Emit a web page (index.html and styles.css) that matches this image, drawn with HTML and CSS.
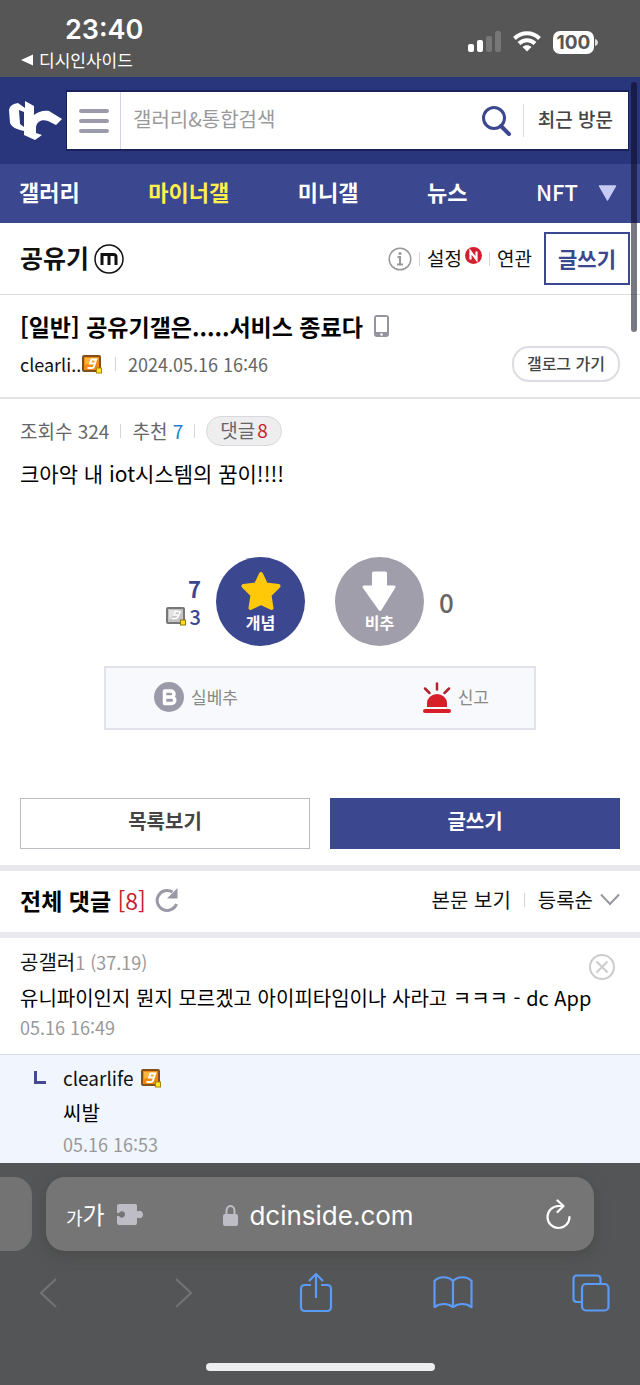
FILE: index.html
```html
<!DOCTYPE html>
<html lang="ko">
<head>
<meta charset="utf-8">
<meta name="viewport" content="width=device-width, initial-scale=1">
<title>공유기 갤러리</title>
<link rel="stylesheet" href="styles.css">
</head>
<body>
<svg class="defs" width="0" height="0" aria-hidden="true">
  <symbol id="badge-g" viewBox="0 0 20 19">
    <rect x="1" y="1" width="17" height="15" rx="1" fill="#f08a10" stroke="#80501c" stroke-width="2"/>
    <path d="M3 3h13v2L3 10z" fill="#ffb43c"/>
    <path d="M14.500 3.500L12 11.500q-.5 1.500-2 1.500H5.500M13.500 4.500H9.500L8 8.500h4.500" fill="none" stroke="#fff" stroke-width="2"/>
    <rect x="14.500" y="13" width="5" height="5" fill="#ffe81e" stroke="#a88310"/>
  </symbol>
  <symbol id="badge-gray" viewBox="0 0 20 19">
    <rect x="1" y="1" width="17" height="15" rx="1" fill="#c4c4c4" stroke="#777" stroke-width="2"/>
    <path d="M3 3h9L3 13z" fill="#e2e2e2"/>
    <path d="M14.500 4L12.500 9l-2 2.500H5.500M13.500 4.500H9.500L8 8h4" fill="none" stroke="#fff" stroke-width="1.500"/>
    <rect x="14.500" y="13" width="5" height="5" fill="#ffdf1e" stroke="#8f7510"/>
  </symbol>
</svg>

<header class="status">
  <div class="status-left">
    <time class="clock">23:40</time>
    <a class="back-app" href="#"><svg width="12" height="12" viewBox="0 0 12 12"><path d="M0 6L12 0.500v11z" fill="#fff"/></svg>디시인사이드</a>
  </div>
  <div class="status-right">
    <svg width="33" height="22" viewBox="0 0 33 22"><rect x="0" y="13" width="6" height="8" rx="2" fill="#fff"/><rect x="9" y="9" width="6" height="12" rx="2" fill="#fff"/><rect x="18" y="5" width="6" height="16" rx="2" fill="#777"/><rect x="27" y="0" width="6" height="21" rx="2" fill="#777"/></svg>
    <svg width="28" height="21" viewBox="0 0 28 21"><g fill="none" stroke="#fff" stroke-width="4"><path d="M1.500 7.500C8.500.500 19.500.500 26.500 7.500"/><path d="M6 12.500c4.500-4.500 11.500-4.500 16 0"/></g><path d="M14 20.500l-4.500-4.500c2.500-2.500 6.500-2.500 9 0z" fill="#fff"/></svg>
    <span class="battery"><span class="battery-level">100</span><svg width="3" height="7" viewBox="0 0 3 7"><path d="M0 0c4 1 4 6 0 7z" fill="#ddd"/></svg></span>
  </div>
</header>

<div class="topbar">
  <a class="logo" href="#" aria-label="dcinside"><svg width="53" height="40" viewBox="0 0 53 40"><path fill="#fff" fill-rule="evenodd" d="M16 0L25 5v9c4-3 9-5 15-4L53 18l-6 6-8-4c-6-2-11 0-12 6v6l6 2-7 5-11-5v-4C10 29 3 27 1 22L0 9C1 5 3 4 5 3l4-1 7 5zM10 9l5 2v15l-4-3z"/></svg></a>
  <form class="search">
    <button class="search-menu" type="button" aria-label="메뉴"><svg width="30" height="24" viewBox="0 0 30 24"><path d="M2 2h26M2 12h26M2 22h26" stroke="#9c9ba9" stroke-width="4" stroke-linecap="round"/></svg></button>
    <input class="search-input" type="text" placeholder="갤러리&amp;통합검색" aria-label="갤러리&amp;통합검색">
    <button class="search-go" type="submit" aria-label="검색"><svg width="29" height="30" viewBox="0 0 29 30"><circle cx="12" cy="12" r="10.500" fill="none" stroke="#3b4890" stroke-width="3"/><path d="M19 20l8 8" stroke="#3b4890" stroke-width="4" stroke-linecap="round"/></svg></button>
    <button class="recent" type="button">최근 방문</button>
  </form>
</div>

<nav class="nav">
  <a href="#">갤러리</a>
  <a class="on" href="#">마이너갤</a>
  <a href="#">미니갤</a>
  <a href="#">뉴스</a>
  <span class="nav-last"><a href="#">NFT</a>
  <button class="nav-more" type="button" aria-label="더보기"><svg width="19" height="16" viewBox="0 0 19 16"><path d="M1.500 1h16L9.500 15z" fill="#c6cbf4" stroke="#c6cbf4" stroke-width="1.500" stroke-linejoin="round"/></svg></button></span>
</nav>

<section class="gallery">
  <h1 class="gallery-name"><a href="#">공유기</a><svg width="30" height="30" viewBox="0 0 30 30"><circle cx="15" cy="15" r="14" fill="none" stroke="#111" stroke-width="1.500"/><path d="M8 21V10.500h11.500q2.500 0 2.500 2.500v8M15 11v10" fill="none" stroke="#111" stroke-width="3"/></svg></h1>
  <div class="gallery-tools">
    <button class="plain" type="button" aria-label="정보"><svg width="24" height="24" viewBox="0 0 24 24"><circle cx="12" cy="12" r="10.800" fill="none" stroke="#999" stroke-width="1.500"/><circle cx="12" cy="6.500" r="1.500" fill="#999"/><path d="M9.500 10H12v7M9 17.500h6" fill="none" stroke="#999" stroke-width="2"/></svg></button>
    <span class="sep"></span>
    <a class="tool" href="#">설정<svg class="new" width="17" height="17" viewBox="0 0 17 17"><circle cx="8.500" cy="8.500" r="8.500" fill="#d31f30"/><path d="M5.500 12.500v-8l6 8v-8" fill="none" stroke="#fff" stroke-width="2.200"/></svg></a>
    <span class="sep"></span>
    <a class="tool related" href="#">연관</a>
    <a class="write-small" href="#">글쓰기</a>
  </div>
</section>

<main>
  <article>
    <header class="post-head">
      <h2 class="post-title">[일반] 공유기갤은.....서비스 종료다<svg width="15" height="22" viewBox="0 0 15 22"><rect width="15" height="22" rx="3" fill="#96959f"/><rect x="2" y="2" width="11" height="15" fill="#fff"/><circle cx="7.500" cy="19.500" r="1.200" fill="#fff"/></svg></h2>
      <div class="post-meta">
        <span class="author">clearli..</span><svg class="badge"><use href="#badge-g"/></svg><span class="sep"></span><time class="date">2024.05.16 16:46</time>
        <a class="gallog" href="#">갤로그 가기</a>
      </div>
    </header>
    <div class="post-body">
      <div class="counts"><span>조회수 324</span><span class="sep"></span><span>추천 <b class="blue">7</b></span><span class="sep"></span><a class="reply-count" href="#">댓글<b class="red">8</b></a></div>
      <p class="text">크아악 내 iot시스템의 꿈이!!!!</p>

      <div class="votes">
        <div class="up-counts">
          <strong>7</strong>
          <span class="fixed"><svg class="badge"><use href="#badge-gray"/></svg>3</span>
        </div>
        <button class="vote up" type="button"><svg width="42" height="41" viewBox="0 0 42 41"><path d="M21 3l5 10.500 12.500 1.500-9 9 2 13L21 32l-10.500 5 2-13-9-9L16 13.500z" fill="#ffc90a" stroke="#ffc90a" stroke-width="4" stroke-linejoin="round"/></svg>개념</button>
        <button class="vote down" type="button"><svg width="42" height="41" viewBox="0 0 42 41"><path d="M14.500 2h12v14h8.500L21 38.500 5 16h9.500z" fill="#fff" stroke="#fff" stroke-width="3" stroke-linejoin="round"/></svg>비추</button>
        <strong class="down-count">0</strong>
      </div>

      <div class="actions">
        <button class="action" type="button"><svg width="30" height="30" viewBox="0 0 30 30"><circle cx="15" cy="15" r="15" fill="#9b9aa9"/><path d="M10.500 9h6.500a2.500 2.500 0 0 1 0 6h-6.500zM10.500 15h7a3 3 0 0 1 0 6.500h-7z" fill="none" stroke="#fff" stroke-width="3.500" stroke-linejoin="round"/></svg>실베추</button>
        <button class="action" type="button"><svg width="28" height="31" viewBox="0 0 28 31"><g stroke="#b3232d" stroke-width="2.500" stroke-linecap="round"><path d="M14 1.500v6M2 6.500l4.500 4.500M26 6.500L21.500 11"/></g><path d="M4 25v-4a10 9 0 0 1 20 0v4z" fill="#d81f29"/><path d="M2 29h24" stroke="#d81f29" stroke-width="4" stroke-linecap="round"/></svg>신고</button>
      </div>

      <div class="buttons"><a class="btn" href="#">목록보기</a><a class="btn primary" href="#">글쓰기</a></div>
    </div>
  </article>

  <section>
    <header class="comments-head">
      <h3>전체 댓글 <span class="total">[8]</span></h3>
      <button class="plain" type="button" aria-label="새로고침"><svg width="24" height="24" viewBox="0 0 24 24"><path d="M21.500 16A10 10 0 1 1 17.500 4" fill="none" stroke="#9998a6" stroke-width="3"/><path d="M22.500 0v10.500H12z" fill="#9998a6"/></svg></button>
      <a class="view-post" href="#">본문 보기</a>
      <span class="sep"></span>
      <button class="plain sort" type="button">등록순<svg width="20" height="13" viewBox="0 0 20 13"><path d="M1 1.500l9 9.500 9-9.500" fill="none" stroke="#9998a0" stroke-width="2"/></svg></button>
    </header>
    <article class="comment">
      <div class="comment-main">
        <p class="name">공갤러<span class="ip">1 (37.19)</span></p>
        <button class="plain" type="button" aria-label="삭제"><svg width="26" height="26" viewBox="0 0 26 26"><g fill="none" stroke="#ccc" stroke-width="2"><circle cx="13" cy="13" r="12"/><path d="M7.500 7.500l11 11m0-11l-11 11"/></g></svg></button>
      </div>
      <p class="text">유니파이인지 뭔지 모르겠고 아이피타임이나 사라고 ㅋㅋㅋ - dc App</p>
      <time class="stamp">05.16 16:49</time>
    </article>
    <article class="comment reply">
      <svg class="reply-mark" width="12" height="13" viewBox="0 0 12 13"><path d="M1.500 0v11.500H12" fill="none" stroke="#454991" stroke-width="3"/></svg>
      <div>
        <p class="name">clearlife<svg class="badge"><use href="#badge-g"/></svg></p>
        <p class="text">씨발</p>
        <time class="stamp">05.16 16:53</time>
      </div>
    </article>
  </section>
</main>

<footer class="browser">
  <div class="tabs">
    <div class="prev-tab"></div>
    <div class="address">
      <button class="plain reader" type="button" aria-label="페이지 설정"><span class="small-ga">가</span>가<svg width="26" height="21" viewBox="0 0 26 21"><path d="M3 0h15q2 0 2 2v5.500c1.500-1.500 6-1 6 3s-4.500 4.500-6 3V19q0 2-2 2H2q-2 0-2-2v-7l2 0c2 3 6 1.500 6-1.500s-4-4.500-6-1.500H0V2q0-2 3-2z" fill="#bebdc6"/></svg></button>
      <span class="domain"><svg width="15" height="21" viewBox="0 0 15 21"><path d="M3.500 10V6a4 5 0 0 1 8 0v4" fill="none" stroke="#bebdc6" stroke-width="2"/><rect y="9" width="15" height="12" rx="2" fill="#bebdc6"/></svg>dcinside.com</span>
      <button class="plain reload" type="button" aria-label="새로고침"><svg width="25" height="31" viewBox="0 0 25 31"><path d="M23.500 18A11 11 0 1 1 12.500 7H17M11.500 1.500L17.500 7l-6 6" fill="none" stroke="#fff" stroke-width="2.200" stroke-linecap="round" stroke-linejoin="round"/></svg></button>
    </div>
  </div>
  <div class="toolbar">
    <button class="plain" type="button" aria-label="뒤로"><svg width="34" height="40" viewBox="0 0 34 40"><path d="M24 6L9 20l15 14" fill="none" stroke="#727374" stroke-width="2.200"/></svg></button>
    <button class="plain" type="button" aria-label="앞으로"><svg width="34" height="40" viewBox="0 0 34 40"><path d="M10 6l15 14-15 14" fill="none" stroke="#727374" stroke-width="2.200"/></svg></button>
    <button class="plain" type="button" aria-label="공유"><svg width="34" height="40" viewBox="0 0 34 40"><path d="M12 12H6q-4 0-4 4v18q0 4 4 4h22q4 0 4-4V16q0-4-4-4h-6M17 25V2M10 8l7-7 7 7" fill="none" stroke="#5b9bf8" stroke-width="2.200"/></svg></button>
    <button class="plain" type="button" aria-label="책갈피"><svg width="40" height="40" viewBox="0 0 40 40"><path d="M20 8C15 3 6 3 1.500 8v26c5.500-4 13-4 18.500 0 5.500-4 13-4 18.500 0V8C34 3 25 3 20 8zv26" fill="none" stroke="#5b9bf8" stroke-width="2.200" stroke-linejoin="round"/></svg></button>
    <button class="plain" type="button" aria-label="탭"><svg width="38" height="40" viewBox="0 0 38 40"><g fill="none" stroke="#5b9bf8" stroke-width="2.200"><path d="M10 29H5q-3.500 0-3.500-3.500V6q0-3.500 3.500-3.500h20q3.500 0 3.500 3.500v5"/><rect x="10" y="11" width="26.500" height="26.500" rx="4"/></g></svg></button>
  </div>
  <div class="home"></div>
</footer>
<div class="scroll-thumb"></div>
</body>
</html>
```
FILE: styles.css
```css
* { box-sizing: border-box; }
body {
  margin: 0;
  position: relative;
  min-height: 100vh;
  display: flex;
  flex-direction: column;
  background: #fff;
  color: #111;
  font: 400 20px/30px "Noto Sans CJK KR", "Noto Sans", sans-serif;
}
h1, h2, h3, p { margin: 0; }
a { color: inherit; text-decoration: none; }
button, input { font: inherit; color: inherit; }
svg { display: block; flex: none; }
.defs { position: absolute; }
.plain { padding: 0; border: 0; background: none; }
.sep { width: 1px; height: 14px; background: #d5d5da; }
.badge { width: 20px; height: 19px; }

.status {
  display: flex;
  justify-content: space-between;
  height: 77px;
  padding: 14px 42px 0 21px;
  background: #565656;
  color: #fff;
}
.clock {
  display: block;
  padding-left: 44px;
  font: 600 27px/32px Inter, sans-serif;
}
.back-app { display: flex; align-items: center; gap: 6px; font-size: 17px; line-height: 28px; }
.status-right { display: flex; align-items: flex-start; gap: 12px; padding-top: 17px; }
.battery { display: flex; align-items: center; gap: 1px; }
.battery-level {
  width: 41px;
  border-radius: 7px;
  background: #fff;
  color: #565656;
  font: 700 19px/23px Inter, sans-serif;
  text-align: center;
}

.topbar {
  display: flex;
  align-items: center;
  gap: 4px;
  padding: 13px 11px 13px 9px;
  background: #29367c;
}
.search {
  flex: 1;
  display: flex;
  align-items: center;
  height: 61px;
  border: 1px solid #18215a;
  border-width: 2px 1px;
  background: #fff;
}
.search-menu {
  display: grid;
  place-items: center;
  width: 54px;
  height: 100%;
  padding: 0;
  border: 0;
  border-right: 1px solid #d3d2e6;
  background: none;
}
.search-input {
  flex: 1;
  min-width: 0;
  padding: 0 12px 3px;
  border: 0;
  outline: 0;
  background: none;
}
.search-input::placeholder { color: #999; opacity: 1; }
.search-go { padding: 0 12px; border: 0; background: none; }
.recent {
  padding: 0 15px 3px 14px;
  border: 0;
  border-left: 1px solid #d8d7e2;
  background: none;
  color: #444;
  font-weight: 500;
  font-size: 19px;
}

.nav {
  display: flex;
  justify-content: space-between;
  align-items: center;
  height: 59px;
  padding: 0 23px 5px 19px;
  background: #3b478f;
  color: #fff;
  font-size: 22px;
  font-weight: 700;
}
.nav .on { color: #fff04b; }
.nav-last { display: flex; align-items: center; gap: 20px; font-weight: 500; }
.nav-more { padding: 4px 0 0; border: 0; background: none; }

.gallery {
  display: flex;
  justify-content: space-between;
  align-items: center;
  height: 72px;
  padding: 0 10px 0 20px;
  border-bottom: 1px solid #ddd;
}
.gallery-name { display: flex; align-items: center; gap: 5px; font-size: 25px; font-weight: 700; }
.gallery-name a { padding-bottom: 4px; }
.gallery-tools { display: flex; align-items: center; gap: 7px; }
.tool { display: flex; align-items: center; gap: 3px; padding-bottom: 2px; font-size: 19px; }
.new { margin-bottom: 4px; }
.related { margin-right: 5px; }
.write-small {
  padding: 9px 12px 10px;
  border: 2px solid #3b4890;
  color: #3b4890;
  font-size: 21px;
  font-weight: 700;
}

.post-head { padding: 15px 20px 13px; border-bottom: 2px solid #e4e4e6; }
.post-title { display: flex; align-items: center; gap: 11px; font-size: 23px; line-height: 32px; font-weight: 700; color: #000; }
.post-meta { display: flex; align-items: center; height: 40px; margin-top: 2px; }
.post-meta .badge { margin: 0 13px 0 0; }
.author { min-width: 62px; font-size: 18px; }
.date { margin-left: 12px; font-size: 18px; color: #666; }
.gallog {
  margin-left: auto;
  padding: 0 13px 2px;
  border: 2px solid #dcdce2;
  border-radius: 17px;
  color: #444;
  font-size: 16px;
  font-weight: 500;
}
.post-body { padding: 17px 20px 16px; }
.counts { display: flex; align-items: center; gap: 11px; color: #666; font-size: 19px; }
.counts b { font-weight: 400; }
.counts .blue { color: #2080d8; }
.reply-count { padding: 0 13px 2px; border: 1px solid #d8d8e0; border-radius: 15px; background: #eee; line-height: 26px; }
.counts .red { margin-left: 2px; color: #c51f2d; }
.text { font-size: 20px; line-height: 36px; color: #000; }
.post-body .text { margin-top: 9px; font-size: 21px; }

.votes {
  display: grid;
  grid-template-columns: 1fr 89px 89px 1fr;
  column-gap: 30px;
  align-items: center;
  margin-top: 66px;
}
.up-counts { display: flex; flex-direction: column; align-items: flex-end; margin-right: -15px; color: #3b4890; }
.up-counts strong { font-size: 22px; font-weight: 700; line-height: 30px; }
.fixed { display: flex; align-items: center; gap: 4px; line-height: 28px; font-size: 20px; font-weight: 500; }
.vote {
  display: flex;
  flex-direction: column;
  align-items: center;
  height: 89px;
  padding: 14px 0 0;
  border: 0;
  border-radius: 50%;
  color: #fff;
  font-size: 16px;
  font-weight: 700;
  line-height: 20px;
}
.up { background: #3b4890; }
.down { background: #9f9eaa; }
.down-count { margin-left: -15px; color: #666; font-size: 26px; font-weight: 500; }

.actions {
  display: flex;
  justify-content: space-between;
  width: 72%;
  height: 64px;
  margin: 20px auto 0;
  padding: 0 45px 0 48px;
  border: 2px solid #e1e2ea;
  background: #f8f9fc;
}
.action { display: flex; align-items: center; gap: 7px; padding: 0 0 2px; border: 0; background: none; color: #888; font-size: 17px; }
.buttons { display: grid; grid-template-columns: 1fr 1fr; gap: 20px; margin-top: 68px; }
.btn {
  padding: 7px 0 12px;
  border: 1px solid #bbbbc2;
  color: #444;
  font-size: 20px;
  font-weight: 700;
  text-align: center;
}
.primary { border-color: #3b4890; background: #3b4890; color: #fff; }

.comments-head {
  display: flex;
  align-items: center;
  height: 73px;
  padding: 0 20px 4px;
  border: solid #e9e8ee;
  border-width: 6px 0;
}
.comments-head h3 { margin-right: 9px; font-size: 23px; font-weight: 700; color: #000; }
.total { color: #c51f2d; font-weight: 400; }
.view-post { margin-left: auto; margin-right: 13px; }
.sort { display: flex; align-items: center; gap: 7px; margin-left: 13px; }

.comment { padding: 8px 20px 14px; border-bottom: 1px solid #d9dae6; }
.comment-main { display: flex; justify-content: space-between; align-items: center; height: 32px; padding-right: 5px; }
.comment-main .plain { padding-top: 10px; }
.comment .text { margin-top: 2px; }
.name { display: flex; align-items: center; }
.name .badge { margin-left: 7px; }
.ip { color: #999; font-size: 18px; }
.stamp { display: block; color: #999; font-size: 18px; line-height: 26px; }
.comment > .stamp { margin-top: -2px; }
.reply { display: flex; gap: 17px; padding: 8px 20px 6px 34px; border: 0; background: #f1f6fe; }
.reply .name { font-size: 19px; }
.reply-mark { margin-top: 8px; }

.browser { flex: 1; padding-top: 14px; background: #545556; }
.tabs { display: flex; gap: 14px; padding-right: 46px; }
.prev-tab { width: 32px; border-radius: 0 18px 18px 0; background: #737373; }
.address {
  flex: 1;
  display: grid;
  grid-template-columns: 1fr auto 1fr;
  align-items: center;
  height: 74px;
  padding: 0 23px 0 20px;
  border-radius: 19px;
  background: #757575;
  box-shadow: 0 4px 14px #4a4a4a;
  color: #fff;
}
.reader { display: flex; align-items: center; color: #fff; font-size: 24px; }
.reader svg { margin-left: 12px; }
.small-ga { font-size: 18px; padding-top: 5px; }
.domain { display: flex; align-items: center; gap: 11px; padding-top: 3px; font: 400 26px/34px Inter, sans-serif; }
.reload { justify-self: end; }
.toolbar { display: flex; justify-content: space-between; padding: 22px 30px 0 32px; }
.home { width: 229px; height: 8px; margin: 50px auto 0; border-radius: 4px; background: #edeeef; }

.scroll-thumb {
  position: absolute;
  top: 82px;
  right: 3px;
  width: 6px;
  height: 250px;
  border-radius: 3px;
  background: rgba(10, 10, 30, 0.55);
}
```
